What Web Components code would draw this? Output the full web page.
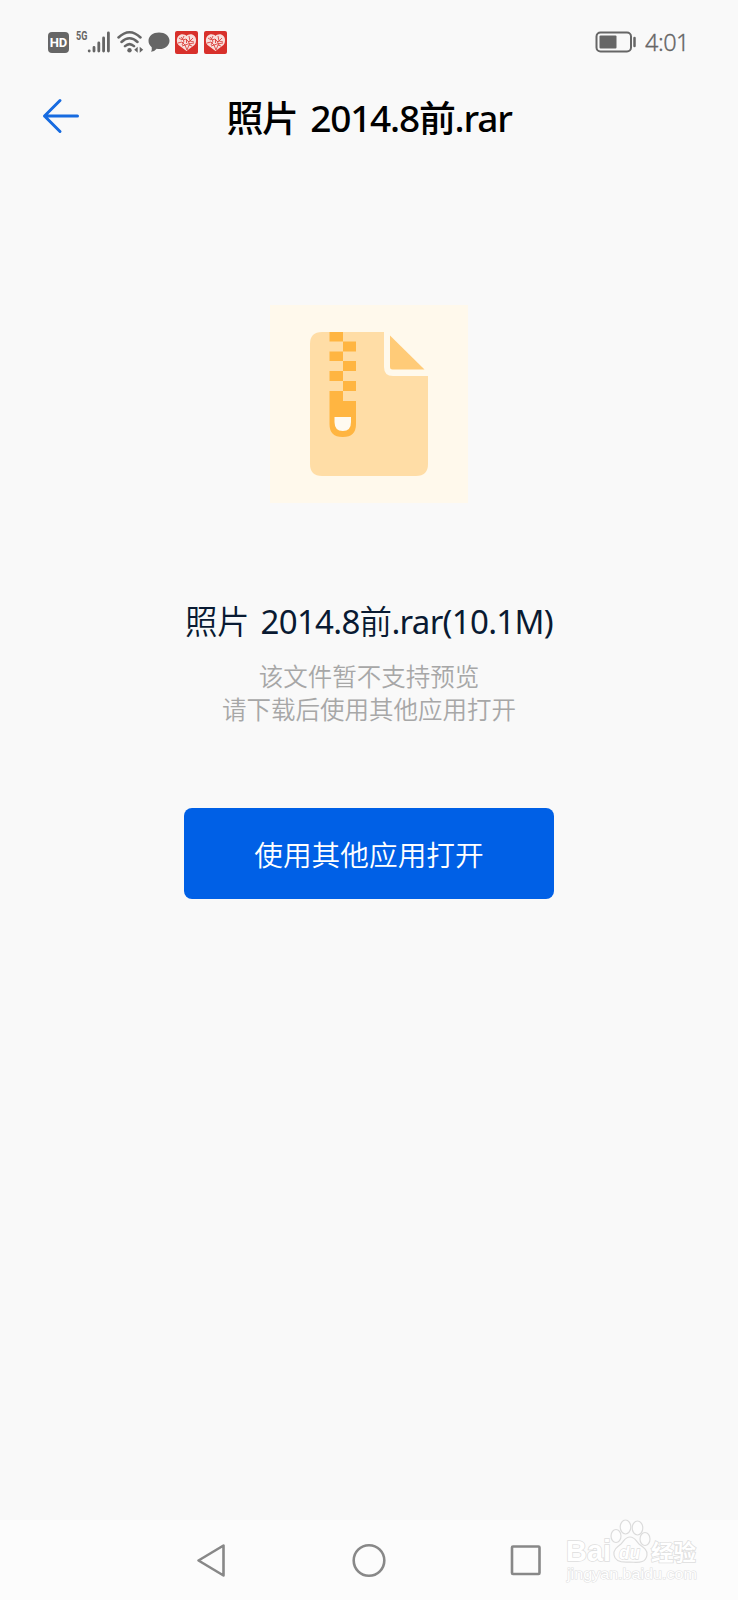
<!DOCTYPE html>
<html lang="zh-CN">
<head>
<meta charset="utf-8">
<title>照片 2014.8前.rar</title>
<style>
html,body{margin:0;height:100%;background:#f9f9f9}
body{font-family:"Noto Sans","Noto Sans CJK SC",sans-serif}
</style>
</head>
<body>
<file-preview-app></file-preview-app>
<script>
function define(name, html) {
  const template = document.createElement('template');
  template.innerHTML = html;
  customElements.define(name, class extends HTMLElement {
    constructor() {
      super();
      this.attachShadow({mode: 'open'}).append(template.content.cloneNode(true));
    }
  });
}

define('heart-badge', `
<style>:host{display:block;width:23px;height:23px}svg{display:block}</style>
<svg width="23" height="23" viewBox="0 0 23 23">
  <rect width="23" height="23" rx="2" fill="#d8302b"/>
  <path d="M11.5 20 3.500 14C.8 10.500 1.500 4.800 5.800 3.400 8.500 2.800 10.600 3.800 11.500 5 12.400 3.800 14.500 2.800 17.200 3.400c4.300 1.400 5 7.100 2.300 10.600z" fill="#f8dedb"/>
  <path d="M4 7l3 2 2-4M8 9l3-1 3 3 4-4M3 12l4-1 3 3 3-1 6-1M7 15l3-1 2 5 2-5 3 1M6 6l3 4-2 4M14 5l1 5 4 1M11.500 8v4M15 14l-2-4" fill="none" stroke="#d8302b" stroke-width=".8"/>
</svg>`);

define('status-bar', `
<style>
:host{display:flex;height:84px;box-sizing:border-box;padding:0 49px 0 48px;align-items:center;justify-content:space-between;color:#666}
.group{display:flex;align-items:center}
svg{display:block}
heart-badge+heart-badge{margin-left:6px}
.time{font:300 23.500px/28px "Noto Sans",sans-serif;letter-spacing:-.5px;margin-left:8px;-webkit-text-stroke:.3px #666}
.hd{width:21px;height:21px;border-radius:4px;background:#666;color:#fff;font:700 13px/21px Roboto,sans-serif;text-align:center}
.net{display:flex;margin-left:7px;height:24px}
.net span{font:700 12px/13px "Roboto",sans-serif;width:11px;transform:scaleX(.75);transform-origin:left}
</style>
<div class="group">
  <div class="hd">HD</div>
  <div class="net"><span>5G</span>
    <svg width="24" height="24" viewBox="0 0 24 24" stroke="#666" stroke-width="2.800" stroke-linecap="round"><path d="M2.200 21v-.2M7 21v-3.500M11.800 21v-8M16.600 21v-13M21.400 21v-18"/></svg>
  </div>
  <svg width="30" height="26" viewBox="0 0 30 26" style="margin-left:5px">
    <g fill="none" stroke="#666" stroke-width="2.500" stroke-linecap="round"><path d="M2.500 8.500Q13.500-2 24.500 8.500M5.500 13Q13.500 5.500 21.500 13M9 17.200Q13.500 13 18 17.200"/></g>
    <circle cx="13.500" cy="21.300" r="2.200" fill="#666"/><path d="M21.700 17.700v6l-3.500-3zM23.700 17.700v6l3.500-3z" fill="#666"/>
  </svg>
  <svg width="22" height="22" viewBox="0 0 22 22" style="margin-left:2px"><path d="M11 1.500c6 0 10.500 3.500 10.500 8.200S17 18 11.500 18c-1 0-2-.1-2.800-.3Q6.500 20.500 3 20.800 4.200 18.500 3.700 16.200C1.600 14.600.5 12.500.5 9.800.5 5 5 1.500 11 1.500z" fill="#666"/></svg>
  <heart-badge style="margin-left:5px"></heart-badge><heart-badge></heart-badge>
</div>
<div class="group">
  <svg width="42" height="24" viewBox="0 0 42 24"><rect x="1.500" y="2.500" width="34.500" height="19" rx="4" fill="none" stroke="#666" stroke-width="2"/><rect x="4.500" y="5.500" width="17" height="13" rx="1" fill="#666"/><path d="M39.500 8v8" stroke="#666" stroke-width="2.500" stroke-linecap="round"/></svg>
  <div class="time">4:01</div>
</div>`);

define('title-bar', `
<style>
:host{display:grid;grid-template-columns:100px 1fr 100px;height:66px;align-items:center;color:#000}
svg{display:block;margin:-2px 0 0 42px}
h1{margin:0;text-align:center;font:500 37px/50px "Noto Sans","Noto Sans CJK SC",sans-serif;white-space:nowrap}
</style>
<svg width="39" height="36" viewBox="0 0 39 36" fill="none" stroke="#176be0" stroke-width="3" stroke-linecap="round" stroke-linejoin="round"><path d="M18 2.500 2.500 18 18 33.500M2.500 18H35.500"/></svg>
<h1><slot></slot></h1><span></span>`);

define('archive-icon', `
<style>:host{display:block;width:198px;height:198px;background:#fff9ec}svg{display:block}</style>
<svg width="198" height="198" viewBox="270 305 198 198">
  <path d="M322 332H384V367Q384 376 393 376H428V464Q428 476 416 476H322Q310 476 310 464V344Q310 332 322 332z" fill="#ffdda6"/>
  <path d="M390 335.500V367Q390 369.500 392.500 369.500H424.500z" fill="#ffcb78"/>
  <path d="M329.500 332H343V341.500H356V351.500H343V361H356V371H343V381H356V391H343V401H356V424Q356 437 343 437H342.500Q329.500 437 329.500 424V391H343V381H329.500V371H343V361H329.500V351.500H343V341.500H329.500z" fill="#ffb541"/>
  <path d="M334.500 417H351V422Q351 431 342.800 431T334.500 422z" fill="#fffaf0"/>
</svg>`);

define('file-details', `
<style>
:host{display:flex;flex-direction:column;align-items:center;text-align:center;white-space:nowrap}
.name{font:400 33px/46px "Noto Sans","Noto Sans CJK SC",sans-serif;color:#091a32}
.note{font:350 24.500px/33px "Noto Sans CJK SC",sans-serif;color:#a7a7a7;margin-top:14px}
</style>
<div class="name"><slot name="name"></slot></div>
<div class="note"><slot name="note"></slot></div>`);

define('open-button', `
<style>
:host{display:block}
button{display:block;width:370px;height:91px;border:0;border-radius:8px;background:#0060e6;color:#fff;padding:0;font:350 28.700px/91px "Noto Sans CJK SC",sans-serif}
</style><button><slot></slot></button>`);

define('baidu-mark', `
<style>:host{display:block}svg{display:block}text{fill:#fff;stroke:#dedede;paint-order:stroke}</style>
<svg width="136" height="68" viewBox="564 1517 136 68">
  <text x="566" y="1561" textLength="45" lengthAdjust="spacingAndGlyphs" font-family="Liberation Sans" font-weight="700" font-size="29" stroke-width="1.500">Bai</text>
  <g fill="#fdfdfd" stroke="#dcdcdc" stroke-width="1.200"><ellipse cx="616" cy="1536" rx="5" ry="6.500"/><ellipse cx="625.500" cy="1527" rx="5.300" ry="7"/><ellipse cx="637.500" cy="1528" rx="5.300" ry="7"/><ellipse cx="645" cy="1539" rx="5" ry="6.500"/>
  <path d="M630 1537c-5 0-6 4-9 7-4 3-8 6-7 11 1 6 6 8 16 7 11 1 16 0 17-7 1-5-4-8-8-11-3-3-4-7-9-7z"/></g>
  <text x="619" y="1559" textLength="21" lengthAdjust="spacingAndGlyphs" font-family="Liberation Sans" font-style="italic" font-weight="700" font-size="19" stroke-width="1.300">du</text>
  <text x="651" y="1559.500" textLength="45" lengthAdjust="spacingAndGlyphs" font-family="Noto Sans CJK SC" font-weight="700" font-size="21.500" stroke-width="1.500">经验</text>
  <text x="567" y="1579" textLength="130" lengthAdjust="spacingAndGlyphs" font-family="Liberation Sans" font-size="14" stroke-width="1" style="stroke:#e0e0e0">jingyan.baidu.com</text>
</svg>`);

define('system-nav', `
<style>
:host{display:grid;grid-template-columns:196px 156px 156px 1fr;height:80px;background:#fcfcfc;align-items:start;box-sizing:border-box}
svg{display:block;margin-top:23px}
baidu-mark{margin-left:20px;margin-top:-3px}
.end{display:flex}
</style>
<span></span>
<svg width="34" height="36" viewBox="196 1543 34 36" fill="none" stroke="#888" stroke-width="2.600" stroke-linejoin="round"><path d="M198.500 1560.500 223.500 1545.500V1575.500z"/></svg>
<svg width="36" height="36" viewBox="352 1543 36 36" fill="none" stroke="#888" stroke-width="2.600"><circle cx="369" cy="1560.500" r="15.300"/></svg>
<div class="end"><svg width="36" height="36" viewBox="508 1543 36 36" fill="none" stroke="#888" stroke-width="2.600"><rect x="512" y="1546.500" width="27.500" height="27.500" rx="1"/></svg>
<baidu-mark></baidu-mark></div>`);

define('file-preview-app', `
<style>
:host{display:flex;flex-direction:column;height:1600px;width:738px;overflow:hidden;background:#f9f9f9}
main{flex:1;display:flex;flex-direction:column;align-items:center;padding-top:155px}
file-details{margin-top:94px}
open-button{margin-top:83px}
.t{letter-spacing:-1.200px;word-spacing:4px}
.t .cjk{font-size:36.900px}
.cjk{font-family:"Noto Sans CJK SC",sans-serif}
h2{margin:0;font:inherit;letter-spacing:-.7px;word-spacing:4px}
h2 .cjk{font-size:32.500px;font-weight:350}
</style>
<status-bar></status-bar>
<title-bar><span class="t"><span class="cjk">照片</span> 2014.8<span class="cjk">前</span>.rar</span></title-bar>
<main>
  <archive-icon></archive-icon>
  <file-details>
    <h2 slot="name"><span class="cjk">照片</span> 2014.8<span class="cjk">前</span>.rar(10.1M)</h2>
    <span slot="note">该文件暂不支持预览<br>请下载后使用其他应用打开</span>
  </file-details>
  <open-button>使用其他应用打开</open-button>
</main>
<system-nav></system-nav>`);
</script>
</body>
</html>
